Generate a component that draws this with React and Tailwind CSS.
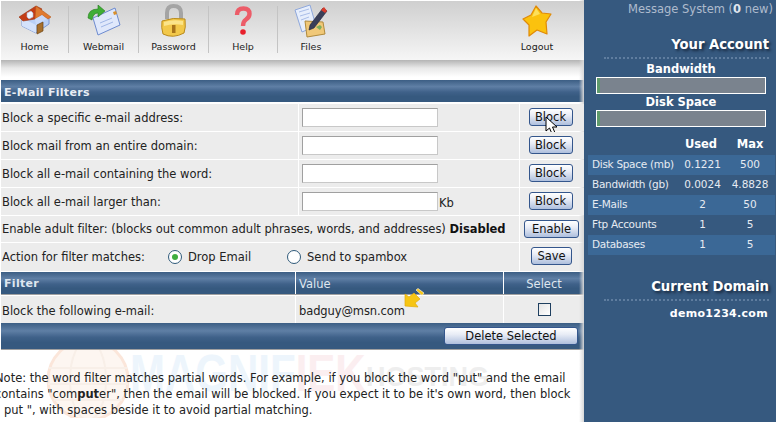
const font = "font-['DejaVu_Sans','Verdana',sans-serif]";
const barBg = "bg-[linear-gradient(to_bottom,#3c5e84_0%,#5f7fa5_30%,#3f6189_55%,#36597f_75%,#36597f_100%)]";

function HomeIcon() {
  return (
    <svg width="34" height="32" viewBox="0 0 34 32">
      <path d="M4 13 L4 21 L18 28 L31 19 L31 12 L19 5 Z" fill="#b9d0f7" stroke="#7b97d4" />
      <path d="M4 13 L18 20 L18 28 L4 21 Z" fill="#d4e2fb" />
      <path d="M1 12 L18 1 L24 4 L17 14 L5 16 Z" fill="#c43d17" stroke="#97300f" strokeWidth="0.6" />
      <path d="M18 1 L33 12 L30 14 L24 10 L17 14 Z" fill="#e07a30" stroke="#b85a1c" strokeWidth="0.6" />
      <path d="M17 14 L24 10 L29 14 L18 20 Z" fill="#c9dafa" />
      <path d="M19 20 L25 17 L25 26 L19 29 Z" fill="#a8702c" stroke="#6c4414" strokeWidth="0.7" />
      <path d="M9 8 L13 6 L15 8 L15 12 L11 14 L9 12 Z" fill="#f2f5ff" stroke="#a8b8dc" strokeWidth="0.6" />
    </svg>
  );
}

function MailIcon() {
  return (
    <svg width="34" height="32" viewBox="0 0 34 32">
      <path d="M6 13 L28 3 L33 20 L11 30 Z" fill="#dfe8fb" stroke="#6d8bd0" />
      <path d="M13 18 L25 13 M14 22 L26 17" stroke="#9fb6e6" strokeWidth="1" />
      <path d="M26 7 L29 6 L30 9 L27 10 Z" fill="#d9902c" />
      <path d="M1 13 Q1 4 11 4 L11 0 L18 6 L11 12 L11 8 Q6 8 5 15 Z" fill="#3fae34" stroke="#237a1c" strokeWidth="0.6" />
    </svg>
  );
}

function LockIcon() {
  return (
    <svg width="25" height="34" viewBox="0 0 25 34">
      <path d="M6 15 L6 9 Q6 2 12.5 2 Q20 2 20 9 L20 15" fill="none" stroke="#a4a4a4" strokeWidth="4" />
      <path d="M1 17 Q12 13 24 15 Q25 24 23 29 Q12 35 2 30 Q0 24 1 17 Z" fill="#f2c84a" stroke="#b98a1c" />
      <path d="M3 18 Q12 15 22 17 L22 21 Q12 19 3 22 Z" fill="#fbe48a" />
      <path d="M11 21 L14.5 21 L14.5 29 L11 29 Z" fill="#a8741a" />
    </svg>
  );
}

function HelpIcon() {
  return (
    <svg width="18" height="30" viewBox="0 0 18 30">
      <path d="M3 9 Q3 2.5 9.5 2.5 Q15.5 2.5 15.5 8 Q15.5 11 12 13.5 Q9 15.5 9 20" fill="none" stroke="#ec5c68" strokeWidth="4.4" />
      <circle cx="9" cy="26" r="2.8" fill="#e8202c" />
    </svg>
  );
}

function FilesIcon() {
  return (
    <svg width="34" height="34" viewBox="0 0 34 34">
      <path d="M1 6 L16 1 L22 22 L8 28 Z" fill="#e6eefc" stroke="#8fa8dc" />
      <path d="M5 8 L15 5 M6 12 L16 9 M7 16 L15 13" stroke="#a9bde8" />
      <path d="M11 17 L29 18 L31 30 L13 33 Z" fill="#f0c878" stroke="#b08a3c" />
      <path d="M16 21 L29 4 L33 7 L20 24 L15 26 Z" fill="#3a3f58" stroke="#20243a" strokeWidth="0.6" />
      <path d="M27 6 L30 3 L33 7 L31 9 Z" fill="#d83a2a" />
      <path d="M22 23 L26 26 L28 23 L26 21 Z" fill="#7fae5c" />
    </svg>
  );
}

function StarIcon() {
  return (
    <svg width="30" height="32" viewBox="0 0 30 32">
      <path d="M14 1 L20 8 L29 9 L24 17 L25 29 L15 25 L7 31 L7 20 L1 14 L9 10 Z" fill="#fbc20e" stroke="#e08a08" strokeWidth="1.2" strokeLinejoin="round" />
      <path d="M14 3 L18 9 L10 12 Z" fill="#fde05a" />
    </svg>
  );
}

const navItems = [
  { label: "Home", icon: HomeIcon, w: "w-[68px]" },
  { label: "Webmail", icon: MailIcon, w: "w-[70px]" },
  { label: "Password", icon: LockIcon, w: "w-[70px]" },
  { label: "Help", icon: HelpIcon, w: "w-[69px]" },
  { label: "Files", icon: FilesIcon, w: "w-[66px]" },
];

function NavItem({ item, divider }) {
  const Icon = item.icon;
  return (
    <div className={`${item.w} h-[47px] mt-[5px] flex flex-col items-center ${divider ? "border-r border-[#c4c4c4]" : ""}`}>
      <div className="h-[36px] -mt-[2px] flex items-center justify-center"><Icon /></div>
      <span className="mt-[3px] text-[9.5px] leading-[12px] text-[#222]">{item.label}</span>
    </div>
  );
}

function Btn({ children, className = "" }) {
  return (
    <button className={`h-[18px] border border-[#34568c] rounded-[3px] bg-[linear-gradient(to_bottom,#ffffff_0%,#e8ecf6_40%,#aebfdd_100%)] text-[11.5px] leading-[14px] text-[#111] flex items-center justify-center ${className}`}>
      {children}
    </button>
  );
}

function InputRow({ label, suffix, hovered }) {
  return (
    <div className="flex h-[27px] mb-px text-[11.5px] text-[#222]">
      <div className="w-[297px] bg-[#ececec] pl-[1px] pt-[2px] flex items-center">{label}</div>
      <div className="w-[220px] ml-px bg-[#ececec] pl-[3px] flex items-center">
        <input className="w-[136px] h-[19px] bg-white border border-[#a0a0a0] border-b-[#c8c8c8] border-r-[#c8c8c8]" readOnly />
        {suffix && <span className="ml-px mt-[5px]">{suffix}</span>}
      </div>
      <div className="flex-1 ml-px bg-[#ececec] flex items-start justify-center pt-[4px] pr-[3px] relative">
        <Btn className="w-[44px]">Block</Btn>
        {hovered && (
          <svg className="absolute left-[25px] top-[12px]" width="14" height="20" viewBox="0 0 14 20">
            <path d="M1 1 L1 15 L4.5 12 L7.5 19 L10.5 18 L7.5 11 L12 11 Z" fill="#fff" stroke="#000" strokeWidth="1" />
          </svg>
        )}
      </div>
    </div>
  );
}

const usage = [
  ["Disk Space (mb)", "0.1221", "500"],
  ["Bandwidth (gb)", "0.0024", "4.8828"],
  ["E-Mails", "2", "50"],
  ["Ftp Accounts", "1", "5"],
  ["Databases", "1", "5"],
];

function Meter({ title }) {
  return (
    <>
      <div className="text-center text-[11.5px] leading-[14px] font-bold text-white w-[170px] ml-[12px]">{title}</div>
      <div className="w-[170px] h-[17px] ml-[12px] mt-[1px] border border-white bg-[#7a838e] flex">
        <div className="w-[3px] bg-[#5f9a6c]" />
      </div>
    </>
  );
}

function SideTitle({ children }) {
  return (
    <>
      <div className="text-right pr-[7px] text-[13.2px] leading-[18px] font-bold text-white [text-shadow:2px_2px_3px_#16263c]">{children}</div>
      <div className="ml-[20px] mr-[7px] mt-[3px] border-t-2 border-dotted border-[#5f7d9f]" />
    </>
  );
}

function Watermark() {
  return (
    <div className="absolute inset-0 overflow-hidden">
      <svg className="absolute left-[44px] -top-[8px]" width="88" height="76" viewBox="0 0 88 76">
        <circle cx="44" cy="38" r="40" fill="#fdf6f1" stroke="#fbe6da" strokeWidth="3" />
        <ellipse cx="44" cy="38" rx="18" ry="40" fill="none" stroke="#f8efe8" strokeWidth="2" />
        <path d="M5 26 L83 26 M4 42 L84 42 M10 58 L78 58" stroke="#f8efe8" strokeWidth="2" />
      </svg>
      <div className="absolute left-[130px] -top-[4px] font-['Liberation_Sans',sans-serif] text-[42px] leading-[44px] font-bold text-[#edf5fc] scale-y-125 origin-top whitespace-nowrap">
        MAGNIF<span className="text-[#fbeef0]">IEK</span>
      </div>
      <div className="absolute left-[366px] top-[12px] font-['Liberation_Sans',sans-serif] text-[27px] leading-[30px] font-bold text-[#eeeeee] whitespace-nowrap">HOSTING</div>
    </div>
  );
}

export default function App() {
  return (
    <div className={`flex w-[776px] h-[422px] overflow-hidden bg-white ${font}`}>
      {/* main column */}
      <div className="w-[584px] shrink-0 pl-px relative">
        <div className="absolute top-0 right-0 bottom-0 w-[5px] bg-[linear-gradient(to_right,#ffffff00,#d8d8d8)]" />
        <div className="h-[59px] mt-px flex bg-[linear-gradient(to_bottom,#cfcfcf,#f6f6f6)] relative">
          {navItems.map((item) => (
            <NavItem key={item.label} item={item} divider={item.label !== "Files"} />
          ))}
          <div className="ml-[158px] w-[70px]">
            <NavItem item={{ label: "Logout", icon: StarIcon, w: "w-[70px]" }} />
          </div>
        </div>
        <div className="h-[20px] bg-[linear-gradient(to_bottom,#b4b4b4,#e8e8e8_40%,#ffffff_85%)]" />

        <div className={`h-[22px] ${barBg} flex items-center pl-[3px] pt-[4px] text-[11px] font-bold text-[#e8edf4] tracking-[0.3px]`}>E-Mail Filters</div>
        <div className="h-[2px]" />

        <InputRow label="Block a specific e-mail address:" hovered />
        <InputRow label="Block mail from an entire domain:" />
        <InputRow label="Block all e-mail containing the word:" />
        <InputRow label="Block all e-mail larger than:" suffix="Kb" />

        <div className="flex h-[26px] mb-px text-[11.5px] text-[#222]">
          <div className="w-[518px] bg-[#ececec] pl-[1px] pt-[2px] flex items-center whitespace-nowrap tracking-[-0.03px]">
            Enable adult filter: (blocks out common adult phrases, words, and addresses)&nbsp;<b className="text-[#111]">Disabled</b>
          </div>
          <div className="flex-1 ml-px bg-[#ececec] flex items-start justify-center pt-[4px] pr-px">
            <Btn className="w-[55px]">Enable</Btn>
          </div>
        </div>

        <div className="flex h-[28px] text-[11.5px] text-[#222]">
          <div className="w-[518px] bg-[#ececec] pl-[1px] pt-[2px] flex items-center">
            <span className="w-[166px]">Action for filter matches:</span>
            <span className="w-[14px] h-[14px] -mt-[2px] rounded-full border border-[#2f5a7a] bg-white flex items-center justify-center">
              <span className="w-[6px] h-[6px] rounded-full bg-[#3fae3f]" />
            </span>
            <span className="ml-[6px] w-[99px]">Drop Email</span>
            <span className="w-[14px] h-[14px] -mt-[2px] rounded-full border border-[#2f5a7a] bg-white" />
            <span className="ml-[6px]">Send to spambox</span>
          </div>
          <div className="flex-1 ml-px bg-[#ececec] flex items-start justify-center pt-[4px] pr-px">
            <Btn className="w-[41px]">Save</Btn>
          </div>
        </div>

        <div className="flex h-[23px] mt-px border-b border-[#a0a0a0] text-[11.5px] text-[#dfe6ef]">
          <div className={`w-[294px] ${barBg} pl-[3px] pt-[3px] flex items-center font-bold text-[11px] tracking-[0.3px]`}>Filter</div>
          <div className={`w-[207px] ml-px ${barBg} pl-[3px] pt-[3px] flex items-center`}>Value</div>
          <div className={`w-[80px] ml-px ${barBg} pt-[3px] flex items-center justify-center`}>Select</div>
        </div>

        <div className="flex h-[28px] text-[11.5px] text-[#222] border-t border-white">
          <div className="w-[294px] bg-[#ececec] pl-[1px] pt-[4px] flex items-center">Block the following e-mail:</div>
          <div className="w-[207px] ml-px bg-[#ececec] pl-[3px] pt-[4px] flex items-center relative tracking-[-0.1px]">
            badguy@msn.com
            <svg className="absolute left-[106px] -top-[9px]" width="24" height="24" viewBox="0 0 24 24">
              <path d="M3 19 L3 7 L7 10 L12 6 L18 12 L13 16 L16 20 Z" fill="#f6c514" stroke="#e3aa0a" strokeWidth="0.7" strokeLinejoin="round" />
              <path d="M14 3 L16 1.5 L22 6 L20 8.5 Z" fill="#f6c514" stroke="#fff" strokeWidth="0.6" />
            </svg>
          </div>
          <div className="flex-1 ml-px bg-[#ececec] flex items-center justify-center">
            <span className="w-[13px] h-[13px] border border-[#1f3f5f] bg-[linear-gradient(135deg,#e4e4e4,#ffffff)]" />
          </div>
        </div>

        <div className={`h-[27px] ${barBg} border-b border-[#a0a0a0] flex items-start justify-end pt-[4px] pr-[6px]`}>
          <Btn className="w-[134px]">Delete Selected</Btn>
        </div>

        <div className="relative pt-[20px] -ml-px">
          <Watermark />
          <p className="relative w-[600px] -ml-[5px] text-[11.5px] leading-[16px] text-[#222] whitespace-nowrap">
            Note: the word filter matches partial words. For example, if you block the word "put" and the email<br />
            contains "com<b>put</b>er", then the email will be blocked. If you expect it to be it's own word, then block<br />
            " put ", with spaces beside it to avoid partial matching.
          </p>
        </div>
      </div>

      {/* account sidebar */}
      <aside className="flex-1 bg-[#36597f] text-white">
        <div className="text-right pr-[3px] pt-[3px] text-[11.5px] leading-[13px] text-[#aebbcd]">
          Message System (<b className="text-[#dfe5ee]">0</b> new)
        </div>
        <div className="mt-[20px]"><SideTitle>Your Account</SideTitle></div>
        <div className="mt-[3px]"><Meter title="Bandwidth" /></div>
        <div className="mt-[1px]"><Meter title="Disk Space" /></div>

        <div className="flex mt-[9px] ml-[4px] h-[18px] text-[11.5px] font-bold items-center">
          <span className="w-[89px]" />
          <span className="w-[48px] text-center">Used</span>
          <span className="w-[48px] ml-px text-center">Max</span>
        </div>
        <div className="ml-[4px] mr-[1px] mt-[1px]">
          {usage.map(([name, used, max], i) => (
            <div key={name} className={`flex h-[20px] items-center text-[10.5px] text-[#e6ebf2] ${i % 2 === 0 ? "bg-[#3b6896]" : ""}`}>
              <span className="w-[91px] pl-[4px] whitespace-nowrap tracking-[-0.3px]">{name}</span>
              <span className="w-[47px] text-center">{used}</span>
              <span className="w-[48px] text-center">{max}</span>
            </div>
          ))}
        </div>

        <div className="mt-[23px]"><SideTitle>Current Domain</SideTitle></div>
        <div className="text-right pr-[8px] mt-[6px] text-[11px] leading-[14px] font-bold text-white tracking-[0.3px]">demo1234.com</div>
      </aside>
    </div>
  );
}
